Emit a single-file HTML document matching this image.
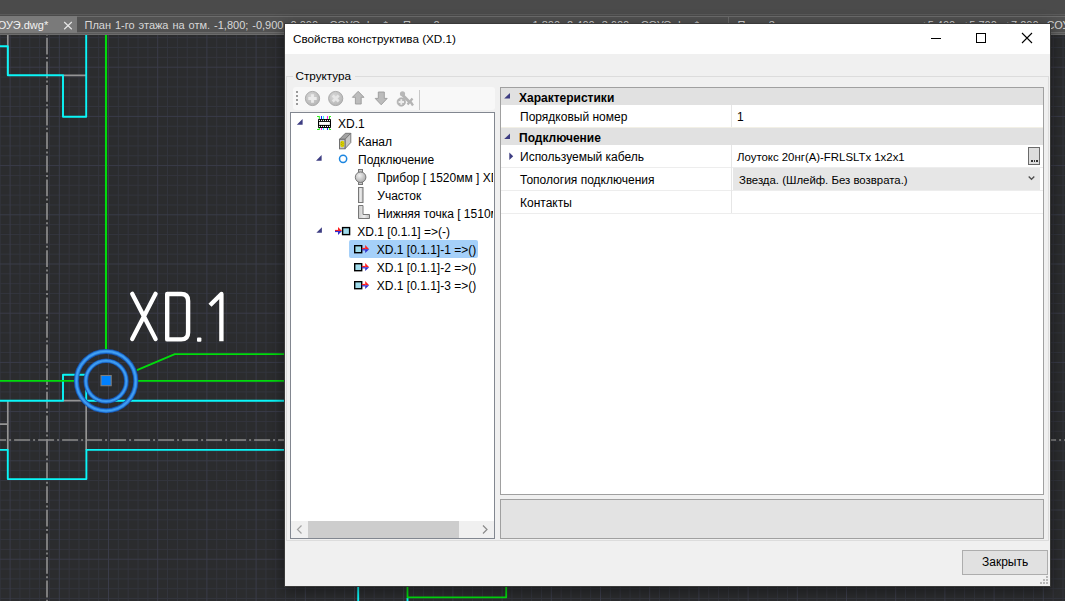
<!DOCTYPE html>
<html><head><meta charset="utf-8">
<style>
*{margin:0;padding:0;box-sizing:border-box}
html,body{width:1065px;height:601px;overflow:hidden;background:#2b2c2e;font-family:"Liberation Sans",sans-serif;position:relative}
.a{position:absolute}
.t{position:absolute;white-space:pre;line-height:1}
</style></head><body>
<svg width="1065" height="601" viewBox="0 0 1065 601" style="position:absolute;left:0;top:0">
<rect x="0" y="35" width="1065" height="566" fill="#2b2c2e"/>
<path d="M0.26 35V601M19.94 35V601M29.78 35V601M39.62 35V601M49.46 35V601M69.14 35V601M78.98 35V601M88.82 35V601M98.66 35V601M118.34 35V601M128.18 35V601M138.02 35V601M147.86 35V601M167.54 35V601M177.38 35V601M187.22 35V601M197.06 35V601M216.74 35V601M226.58 35V601M236.42 35V601M246.26 35V601M265.94 35V601M275.78 35V601M285.62 35V601M295.46 35V601M315.14 35V601M324.98 35V601M334.82 35V601M344.66 35V601M364.34 35V601M374.18 35V601M384.02 35V601M393.86 35V601M413.54 35V601M423.38 35V601M433.22 35V601M443.06 35V601M462.74 35V601M472.58 35V601M482.42 35V601M492.26 35V601M511.94 35V601M521.78 35V601M531.62 35V601M541.46 35V601M561.14 35V601M570.98 35V601M580.82 35V601M590.66 35V601M610.34 35V601M620.18 35V601M630.02 35V601M639.86 35V601M659.54 35V601M669.38 35V601M679.22 35V601M689.06 35V601M708.74 35V601M718.58 35V601M728.42 35V601M738.26 35V601M757.94 35V601M767.78 35V601M777.62 35V601M787.46 35V601M807.14 35V601M816.98 35V601M826.82 35V601M836.66 35V601M856.34 35V601M866.18 35V601M876.02 35V601M885.86 35V601M905.54 35V601M915.38 35V601M925.22 35V601M935.06 35V601M954.74 35V601M964.58 35V601M974.42 35V601M984.26 35V601M1003.94 35V601M1013.78 35V601M1023.62 35V601M1033.46 35V601M1053.14 35V601M1062.98 35V601M0 37.68H1065M0 47.52H1065M0 57.36H1065M0 77.04H1065M0 86.88H1065M0 96.72H1065M0 106.56H1065M0 126.24H1065M0 136.08H1065M0 145.92H1065M0 155.76H1065M0 175.44H1065M0 185.28H1065M0 195.12H1065M0 204.96H1065M0 224.64H1065M0 234.48H1065M0 244.32H1065M0 254.16H1065M0 273.84H1065M0 283.68H1065M0 293.52H1065M0 303.36H1065M0 323.04H1065M0 332.88H1065M0 342.72H1065M0 352.56H1065M0 372.24H1065M0 382.08H1065M0 391.92H1065M0 401.76H1065M0 421.44H1065M0 431.28H1065M0 441.12H1065M0 450.96H1065M0 470.64H1065M0 480.48H1065M0 490.32H1065M0 500.16H1065M0 519.84H1065M0 529.68H1065M0 539.52H1065M0 549.36H1065M0 569.04H1065M0 578.88H1065M0 588.72H1065M0 598.56H1065" stroke="#33353d" stroke-width="1" fill="none"/>
<path d="M10.10 35V601M59.30 35V601M108.50 35V601M157.70 35V601M206.90 35V601M256.10 35V601M305.30 35V601M354.50 35V601M403.70 35V601M452.90 35V601M502.10 35V601M551.30 35V601M600.50 35V601M649.70 35V601M698.90 35V601M748.10 35V601M797.30 35V601M846.50 35V601M895.70 35V601M944.90 35V601M994.10 35V601M1043.30 35V601M0 67.20H1065M0 116.40H1065M0 165.60H1065M0 214.80H1065M0 264.00H1065M0 313.20H1065M0 362.40H1065M0 411.60H1065M0 460.80H1065M0 510.00H1065M0 559.20H1065" stroke="#3a3c49" stroke-width="1" fill="none"/>
<g fill="none" stroke-linecap="butt" stroke-linejoin="round">
 <!-- dash-dot center lines -->
 <path d="M47 35V601" stroke="#8c8c8c" stroke-width="1.7" stroke-dasharray="16.8 2.4 2 2.4" stroke-dashoffset="-2.8"/>
 <path d="M0 440H285M1050 440H1065" stroke="#8c8c8c" stroke-width="1.7" stroke-dasharray="16 3 2 3" stroke-dashoffset="9.9"/>
 <!-- gray lines -->
 <path d="M7.8 35V75.3M63 75.3H86.2M7.8 400.7V449.9M0 424.2H7.8M86.2 400.7V449.9M63 400.7H86.2" stroke="#959595" stroke-width="1.7"/>
 <!-- cyan -->
 <path d="M0 46.2H7.8V75.3H63V116.7H86.2V35" stroke="#0af6f8" stroke-width="1.9"/>
 <path d="M0 400.7H63V374.8H86.2V400.7M86.2 400.7H285" stroke="#0af6f8" stroke-width="1.9"/>
 <path d="M0 449.9H7.8V479.1H86.4V449.9H285" stroke="#0af6f8" stroke-width="1.9"/>
 <path d="M358.2 586V601M407.5 598V601" stroke="#0af6f8" stroke-width="1.9"/>
 <!-- green -->
 <path d="M106 35V349" stroke="#00dc0c" stroke-width="2.1"/>
 <path d="M0 380.8H75M137 380.8H285" stroke="#00dc0c" stroke-width="1.8"/>
 <path d="M137 370.2L174.8 354.2H285" stroke="#00dc0c" stroke-width="1.8"/>
 <path d="M407.5 586V597.3H506.2V586" stroke="#00dc0c" stroke-width="1.8"/>
 <!-- circles -->
 <circle cx="106.1" cy="381.1" r="29.7" stroke="#1554b0" stroke-width="5"/>
 <circle cx="106.1" cy="381.1" r="29.7" stroke="#2f8ae6" stroke-width="3.2"/>
 <circle cx="106.1" cy="381.1" r="29.7" stroke="#44a2f4" stroke-width="1.2"/>
 <circle cx="106.1" cy="381.1" r="20.3" stroke="#1554b0" stroke-width="4.6"/>
 <circle cx="106.1" cy="381.1" r="20.3" stroke="#2f8ae6" stroke-width="2.9"/>
 <circle cx="106.1" cy="381.1" r="20.3" stroke="#44a2f4" stroke-width="1.1"/>
</g>
<rect x="101" y="375.5" width="10.2" height="10.2" fill="#0080ff" stroke="#7d7d7d" stroke-width="1.1"/>
<!-- XD.1 -->
<g fill="none" stroke="#ffffff" stroke-width="4.3" stroke-linecap="round">
 <path d="M132.2 293.8L155.6 339.1M155.6 293.8L132.2 339.1"/>
</g>
<g fill="none" stroke="#ffffff" stroke-width="4.4" stroke-linejoin="round">
 <path d="M167.2 294V339.4H181.2Q188.1 339.4 188.1 332.5V300.9Q188.1 294 181.2 294Z"/>
 <path d="M221.4 341.2V294L210 305.3" stroke-linecap="butt"/>
</g>
<rect x="197" y="337.5" width="4.4" height="4.2" rx="1" fill="#fff"/>
</svg>
<!-- top bars -->
<div class="a" style="left:0;top:0;width:1065px;height:16px;background:#4b4b4b"></div>
<div class="a" style="left:0;top:14px;width:1065px;height:1px;background:#5a5a5a"></div>
<div class="a" style="left:0;top:16px;width:1065px;height:19px;background:#6c6c6c"></div>
<div class="a" style="left:0;top:33px;width:1065px;height:1px;background:#5a5a5a"></div>
<div class="a" style="left:0;top:16px;width:77px;height:17px;background:#7a7a7a"></div>
<div class="a" style="left:77px;top:17px;width:318px;height:15px;background:#525252"></div>
<div class="a" style="left:395px;top:17px;width:333px;height:15px;background:#525252"></div>
<div class="a" style="left:729px;top:17px;width:336px;height:15px;background:#525252"></div>
<div class="t" style="left:-2.3px;top:20px;font-size:11px;color:#f2f2f2">ОУЭ.dwg*</div>
<svg class="a" style="left:63px;top:21px" width="10" height="9"><path d="M1.2 1L8.8 8.2M8.8 1L1.2 8.2" stroke="#e6e6e6" stroke-width="1.2"/></svg>
<div class="t" style="left:84.5px;top:20px;font-size:11px;word-spacing:0.9px;color:#d8d8d8">План 1-го этажа на отм. -1,800; -0,900; 0,000 - СОУЭ.dwg*</div>
<div class="t" style="left:403px;top:20px;font-size:11px;word-spacing:0.9px;color:#d8d8d8">План 2-го этажа на отм. 1,800; 2,400; 3,600 - СОУЭ.dwg*</div>
<div class="t" style="left:737.5px;top:20px;font-size:11px;word-spacing:1.6px;color:#d8d8d8">План 3-го этажа и кровли на отм. +5,400; +5,700; +7,200 -</div><div class="t" style="left:1046.5px;top:20px;font-size:11px;color:#d8d8d8">СОУЭ.dwg*</div>

<!-- dialog -->
<div class="a" style="left:284px;top:23px;width:767px;height:564px;background:#3a3a3a;box-shadow:0 3px 14px rgba(0,0,0,0.45)"></div>
<div class="a" style="left:285px;top:24px;width:765px;height:562px;background:#f0f0f0"></div>
<div class="a" style="left:285px;top:24px;width:765px;height:30px;background:#ffffff"></div>
<div class="t" style="left:293px;top:33px;font-size:11.7px;color:#000">Свойства конструктива (XD.1)</div>
<svg class="a" style="left:920px;top:28px" width="125" height="20">
 <path d="M11 10.5H21" stroke="#000" stroke-width="1"/>
 <rect x="56.5" y="5.5" width="9" height="9" fill="none" stroke="#000" stroke-width="1"/>
 <path d="M102 5L112 15M112 5L102 15" stroke="#000" stroke-width="1.1"/>
</svg>

<!-- group box -->
<div class="a" style="left:286px;top:76px;width:763px;height:465px;border:1px solid #dcdcdc"></div>
<div class="a" style="left:293px;top:70px;width:62px;height:12px;background:#f0f0f0"></div>
<div class="t" style="left:295.5px;top:69.5px;font-size:11.7px;color:#000">Структура</div>
<!-- toolbar -->
<div class="a" style="left:293px;top:87px;width:202px;height:23px;background:#f8f8f8;border-radius:3px"></div>
<div class="a" style="left:419px;top:90px;width:1px;height:20px;background:#c8c8c8"></div>
<svg class="a" style="left:293px;top:87px" width="130" height="24">
 <g fill="#9a9a9a"><rect x="3" y="4" width="2" height="2"/><rect x="3" y="8" width="2" height="2"/><rect x="3" y="12" width="2" height="2"/><rect x="3" y="16" width="2" height="2"/></g>
 <defs><radialGradient id="gg" cx="0.4" cy="0.35" r="0.7"><stop offset="0" stop-color="#d8d8d8"/><stop offset="1" stop-color="#b4b4b4"/></radialGradient></defs>
 <circle cx="19.5" cy="11.5" r="7.1" fill="url(#gg)" stroke="#a4a4a4" stroke-width="0.9"/>
 <path d="M19.5 7.3V15.7M15.3 11.5H23.7" stroke="#ececec" stroke-width="2.8"/>
 <circle cx="42.7" cy="11.5" r="7.1" fill="url(#gg)" stroke="#a4a4a4" stroke-width="0.9"/>
 <path d="M39.7 8.5L45.7 14.5M45.7 8.5L39.7 14.5" stroke="#e6e6e6" stroke-width="2.6"/>
 <path d="M65.2 4.3L71 10.3H68.2V17H62.4V10.3H59.4Z" fill="#bcbcbc" stroke="#9a9a9a" stroke-width="0.9" stroke-linejoin="round"/>
 <path d="M85.3 5H91.3V11.4H94.2L88.2 17.8L82.2 11.4H85.3Z" fill="#bcbcbc" stroke="#9a9a9a" stroke-width="0.9" stroke-linejoin="round"/>
 <circle cx="109.5" cy="6.8" r="2.6" fill="#b8b8b8"/>
 <path d="M110 8.5L117 15.5" stroke="#b4b4b4" stroke-width="3"/>
 <path d="M114.5 17.5L119.5 11.5M117 14L120 18.5" stroke="#b4b4b4" stroke-width="2.3"/>
 <circle cx="108.3" cy="15" r="4.2" fill="#b6b6b6" stroke="#a6a6a6" stroke-width="0.6"/>
 <path d="M108.3 12.3V17.7M105.6 15H111" stroke="#ececec" stroke-width="1.8"/>
</svg>
<!-- tree -->
<div class="a" style="left:290px;top:112px;width:205px;height:427px;border:1px solid #828790;background:#fff;overflow:hidden">
</div>

<div class="a" style="left:349px;top:240px;width:129px;height:18px;background:#a5d0f9;border-radius:2px"></div>
<svg class="a" style="left:290px;top:112px" width="205" height="200">
 <g fill="#3d3d82">
  <path d="M12.6 7L12.6 12.7L6.8 12.7Z"/>
  <path d="M31.6 43L31.6 48.8L26 48.8Z"/>
  <path d="M31.9 115.2L31.9 120.7L26.4 120.7Z"/>
 </g>
 <!-- IC chip -->
 <g fill="none" stroke-width="1.05">
  <path d="M27 4.5H29.3V7M39.5 7V4.5H41M29.3 16V17.5H27M39.5 16V17.5H41" stroke="#33ee22"/>
  <path d="M31.5 4V7M37.5 16V18" stroke="#1530ff"/>
  <path d="M33.5 4V7M33.5 16V18" stroke="#22eeff"/>
  <path d="M37.5 4V7M31.5 16V18" stroke="#ff22ee"/>
 </g>
 <rect x="28" y="7" width="13" height="9" rx="0.8" fill="#000"/>
 <rect x="29.1" y="9.9" width="10.8" height="3" fill="#fff"/>
 <g fill="#fff"><circle cx="29.4" cy="8.4" r="0.6"/><circle cx="31.5" cy="8.4" r="0.6"/><circle cx="33.4" cy="8.4" r="0.6"/><circle cx="35.5" cy="8.4" r="0.6"/><circle cx="37.5" cy="8.4" r="0.6"/><circle cx="39.5" cy="8.4" r="0.6"/>
 <circle cx="29.4" cy="14.4" r="0.6"/><circle cx="31.5" cy="14.4" r="0.6"/><circle cx="33.4" cy="14.4" r="0.6"/><circle cx="35.5" cy="14.4" r="0.6"/><circle cx="37.5" cy="14.4" r="0.6"/><circle cx="39.5" cy="14.4" r="0.6"/></g>
 <!-- channel box -->
 <path d="M49.5 27.3L55.3 21.3H60.8L55 27.3Z" fill="#a2a2a2" stroke="#707070" stroke-width="0.9" stroke-linejoin="round"/>
 <path d="M55 27.3L60.8 21.3V30.5L55 36.8Z" fill="#c6c6c6" stroke="#707070" stroke-width="0.9" stroke-linejoin="round"/>
 <rect x="49.5" y="27.3" width="5.5" height="9.5" fill="#c4c6d2" stroke="#707070" stroke-width="1"/>
 <ellipse cx="52.3" cy="32" rx="2.1" ry="3.3" fill="#d8d000"/>
 <g fill="#807800"><circle cx="51.6" cy="30.6" r="0.45"/><circle cx="53" cy="31.6" r="0.45"/><circle cx="51.6" cy="32.6" r="0.45"/><circle cx="53" cy="33.6" r="0.45"/></g>
 <!-- connection circle -->
 <circle cx="53.1" cy="46.8" r="3.6" fill="none" stroke="#1c86e0" stroke-width="1.5"/>
 <!-- device -->
 <defs><radialGradient id="dg" cx="0.4" cy="0.35" r="0.7"><stop offset="0" stop-color="#f0f0f0"/><stop offset="1" stop-color="#a8a8a8"/></radialGradient>
 <linearGradient id="bg1" x1="0" x2="1"><stop offset="0" stop-color="#c8c8c8"/><stop offset="0.5" stop-color="#ededed"/><stop offset="1" stop-color="#c0c0c0"/></linearGradient></defs>
 <rect x="68.5" y="57.5" width="4" height="3" fill="#c8c8c8" stroke="#777" stroke-width="1"/>
 <rect x="68.5" y="69.5" width="4" height="3" fill="#c8c8c8" stroke="#777" stroke-width="1"/>
 <circle cx="70.6" cy="65.2" r="5.3" fill="url(#dg)" stroke="#777" stroke-width="1"/>
 <!-- bar -->
 <rect x="68.5" y="75.5" width="4.5" height="15" fill="url(#bg1)" stroke="#777" stroke-width="1"/>
 <!-- L -->
 <path d="M68.5 93.5H73V102.5H79.5V106.5H68.5Z" fill="url(#bg1)" stroke="#777" stroke-width="1"/>
 <!-- arrow->square row6 -->
 <path d="M45 118.5H50" stroke="#ff2020" stroke-width="1.2"/>
 <path d="M45 119.5H50" stroke="#3030d0" stroke-width="1.2"/>
 <path d="M48 115L52 119L48 119Z" fill="#ff2020"/><path d="M48 119L52 119L48 123Z" fill="#3030d0"/>
 <rect x="52.6" y="115.6" width="7" height="7" fill="#a0dcec" stroke="#000" stroke-width="1.4"/>
 <!-- square->arrow rows 7-9 -->
 <g id="sq">
  <rect x="64.7" y="133.7" width="7" height="7" fill="#a0dcec" stroke="#000" stroke-width="1.4"/>
  <path d="M71.8 136.6H75.3" stroke="#ff2020" stroke-width="1.4"/>
  <path d="M71.8 137.8H75.3" stroke="#3030d0" stroke-width="1.2"/>
  <path d="M75.2 133L79.2 137.2H75.2Z" fill="#ff2020"/><path d="M75.2 137.2H79.2L75.2 141Z" fill="#3030d0"/>
 </g>
 <use href="#sq" y="18"/>
 <use href="#sq" y="36"/>
</svg>
<div class="a" style="left:290px;top:110px;width:202.5px;height:200px;overflow:hidden">
 <div class="t" style="left:48px;top:8px;font-size:12px;color:#000">XD.1</div>
 <div class="t" style="left:68px;top:26px;font-size:12px;color:#000">Канал</div>
 <div class="t" style="left:68px;top:44px;font-size:12px;color:#000">Подключение</div>
 <div class="t" style="left:87.3px;top:62px;font-size:12px;color:#000">Прибор [ 1520мм ] XD.1</div>
 <div class="t" style="left:87.3px;top:80px;font-size:12px;color:#000">Участок</div>
 <div class="t" style="left:87.3px;top:98px;font-size:12px;color:#000">Нижняя точка [ 1510мм ]</div>
 <div class="t" style="left:67.3px;top:116px;font-size:12px;color:#000">XD.1 [0.1.1] =&gt;(-)</div>
 <div class="t" style="left:86.8px;top:134px;font-size:12px;color:#000">XD.1 [0.1.1]-1 =&gt;()</div>
 <div class="t" style="left:86.8px;top:152px;font-size:12px;color:#000">XD.1 [0.1.1]-2 =&gt;()</div>
 <div class="t" style="left:86.8px;top:170px;font-size:12px;color:#000">XD.1 [0.1.1]-3 =&gt;()</div>
</div>
<!-- scrollbar -->
<div class="a" style="left:291px;top:521px;width:203px;height:17px;background:#f0f0f0"></div>
<div class="a" style="left:308px;top:521px;width:151px;height:17px;background:#cdcdcd"></div>
<svg class="a" style="left:291px;top:521px" width="203" height="17">
 <path d="M10.5 4.5L6.5 8.5L10.5 12.5" fill="none" stroke="#a3a3a3" stroke-width="1.2"/>
 <path d="M192 4.5L196 8.5L192 12.5" fill="none" stroke="#8a8a8a" stroke-width="1.2"/>
</svg>
<!-- property grid -->
<div class="a" style="left:500px;top:87px;width:544px;height:408px;border:1px solid #a0a0a0;background:#fff"></div>
<div class="a" style="left:501px;top:88px;width:542px;height:17px;background:#e1e1e1"></div>
<div class="a" style="left:501px;top:128px;width:542px;height:17px;background:#e1e1e1"></div>
<div class="a" style="left:501px;top:127px;width:542px;height:1px;background:#f2f0e6"></div>
<div class="a" style="left:501px;top:167px;width:542px;height:1px;background:#ededed"></div>
<div class="a" style="left:501px;top:190px;width:542px;height:1px;background:#ededed"></div>
<div class="a" style="left:501px;top:213px;width:542px;height:1px;background:#ededed"></div>
<div class="a" style="left:731px;top:105px;width:1px;height:22px;background:#e6e6e6"></div>
<div class="a" style="left:731px;top:145px;width:1px;height:68px;background:#e6e6e6"></div>
<div class="a" style="left:733px;top:168px;width:307px;height:22px;background:#e6e6e6"></div>
<div class="a" style="left:1028px;top:147px;width:12px;height:18px;background:#dddddd;border:1px solid #6a6a6a"></div>
<div class="a" style="left:1031px;top:160px;width:1.5px;height:2px;background:#333"></div><div class="a" style="left:1033.5px;top:160px;width:1.5px;height:2px;background:#333"></div><div class="a" style="left:1036px;top:160px;width:1.5px;height:2px;background:#333"></div>
<svg class="a" style="left:500px;top:87px" width="544" height="130">
 <g fill="#3d3d82">
  <path d="M10 6L10 11.5L4.2 11.5Z"/>
  <path d="M10 46.5L10 52L4.2 52Z"/>
  <path d="M9.3 65.5L13.2 69.3L9.3 73Z"/>
 </g>
 <path d="M528.7 89.5L531.5 92.3L534.3 89.5" fill="none" stroke="#505050" stroke-width="1.3"/>
</svg>
<div class="t" style="left:519px;top:92px;font-size:12px;font-weight:bold;color:#000">Характеристики</div>
<div class="t" style="left:520px;top:111px;font-size:12px;color:#000">Порядковый номер</div>
<div class="t" style="left:737px;top:111px;font-size:12px;color:#000">1</div>
<div class="t" style="left:519px;top:132px;font-size:12px;font-weight:bold;color:#000">Подключение</div>
<div class="t" style="left:520px;top:151px;font-size:12px;color:#000">Используемый кабель</div>
<div class="t" style="left:737px;top:152px;font-size:11.4px;color:#000">Лоутокс 20нг(A)-FRLSLTx 1x2x1</div>
<div class="t" style="left:520px;top:174px;font-size:12px;color:#000">Топология подключения</div>
<div class="t" style="left:739px;top:175px;font-size:11.4px;color:#000">Звезда. (Шлейф. Без возврата.)</div>
<div class="t" style="left:520px;top:197px;font-size:12px;color:#000">Контакты</div>
<div class="a" style="left:500px;top:499px;width:544px;height:40px;border:1px solid #a0a0a0;background:#e3e3e3"></div>
<!-- close button -->
<div class="a" style="left:962px;top:550px;width:86px;height:25px;border:1px solid #adadad;background:#e1e1e1"></div>
<div class="t" style="left:982px;top:556px;font-size:12px;color:#000">Закрыть</div>
<svg class="a" style="left:1038px;top:574px" width="12" height="12"><g fill="#b8b8b8"><rect x="8" y="2" width="2" height="2"/><rect x="5" y="5" width="2" height="2"/><rect x="8" y="5" width="2" height="2"/><rect x="2" y="8" width="2" height="2"/><rect x="5" y="8" width="2" height="2"/><rect x="8" y="8" width="2" height="2"/></g></svg>
</body></html>
